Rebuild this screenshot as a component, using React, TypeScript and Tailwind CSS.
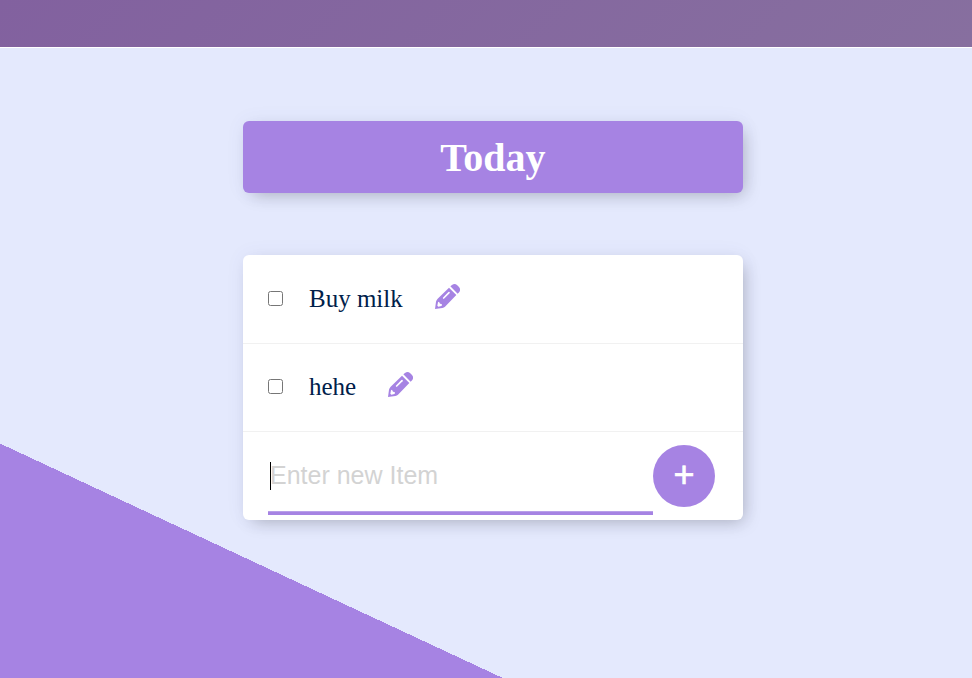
import React from "react";

function Pencil() {
  return (
    <svg viewBox="0 0 75 75" className="mb-1 ml-8 size-[25px]" aria-hidden="true">
      <path
        fill="#a683e3"
        d="M46 7l5-4q8-6 15 0l6 6q6 7 1 15l-5 5zM42 11l22 22-34 35q-3 3-8 4L0 75l3-22q1-5 5-9z"
      />
      <path fill="#fff" d="M12 53l3 6 5 1 1 4-2 2-9 2-3-3 2-10z" />
      <path stroke="#fff" strokeWidth="5" strokeLinecap="round" d="M26 42l16-16" />
    </svg>
  );
}

function Item({ label, spacing }: { label: string; spacing: string }) {
  return (
    <div className={`flex ${spacing} items-center border-b border-[#f1f1f1] pl-[25px]`}>
      <input type="checkbox" className="m-0 size-[15px]" />
      <p className="ml-[26px] text-[25px] text-[#00204a]">{label}</p>
      <Pencil />
    </div>
  );
}

export default function App() {
  return (
    <div className="h-[678px] overflow-hidden bg-[#e4e9fd] bg-[linear-gradient(25deg,#a683e3_212.5px,transparent_212.5px)] font-['Liberation_Serif',serif]">
      <div className="h-12 border-b border-white bg-[linear-gradient(135deg,#82619f,#876f9f)]" />
      <h1 className="mt-[73px] ml-[243px] flex h-[72px] w-[500px] items-center justify-center rounded-[6px] bg-[#a683e3] pt-px text-[40px] font-bold text-white shadow-[5px_6px_17px_-5px_rgba(0,0,0,0.25),0_0_20px_rgba(90,90,160,0.06)]">
        Today
      </h1>
      <div className="mt-[62px] ml-[243px] h-[265px] w-[500px] rounded-[6px] bg-white shadow-[5px_6px_17px_-5px_rgba(0,0,0,0.25),0_0_20px_rgba(90,90,160,0.06)]">
        <Item label="Buy milk" spacing="h-[89px] pb-px" />
        <Item label="hehe" spacing="h-[88px] pb-0.5" />
        <div className="flex pl-[25px]">
          <div className="flex h-[83px] w-[385px] items-center border-b-3 border-[#a683e3] pt-[7px] shadow-[inset_0_-1px_#b99fe9]">
            <span className="ml-[2px] h-[28px] w-px bg-black" />
            <span className="-ml-px font-['Liberation_Sans',sans-serif] text-[25px] text-[#d3d3d3]">Enter new Item</span>
          </div>
          <button className="mt-[13px] flex size-[62px] items-center justify-center rounded-full bg-[#a683e3] pb-[3px] font-['Liberation_Sans',sans-serif] text-[36px] text-white [-webkit-text-stroke:0.7px_white]">
            +
          </button>
        </div>
      </div>
    </div>
  );
}
